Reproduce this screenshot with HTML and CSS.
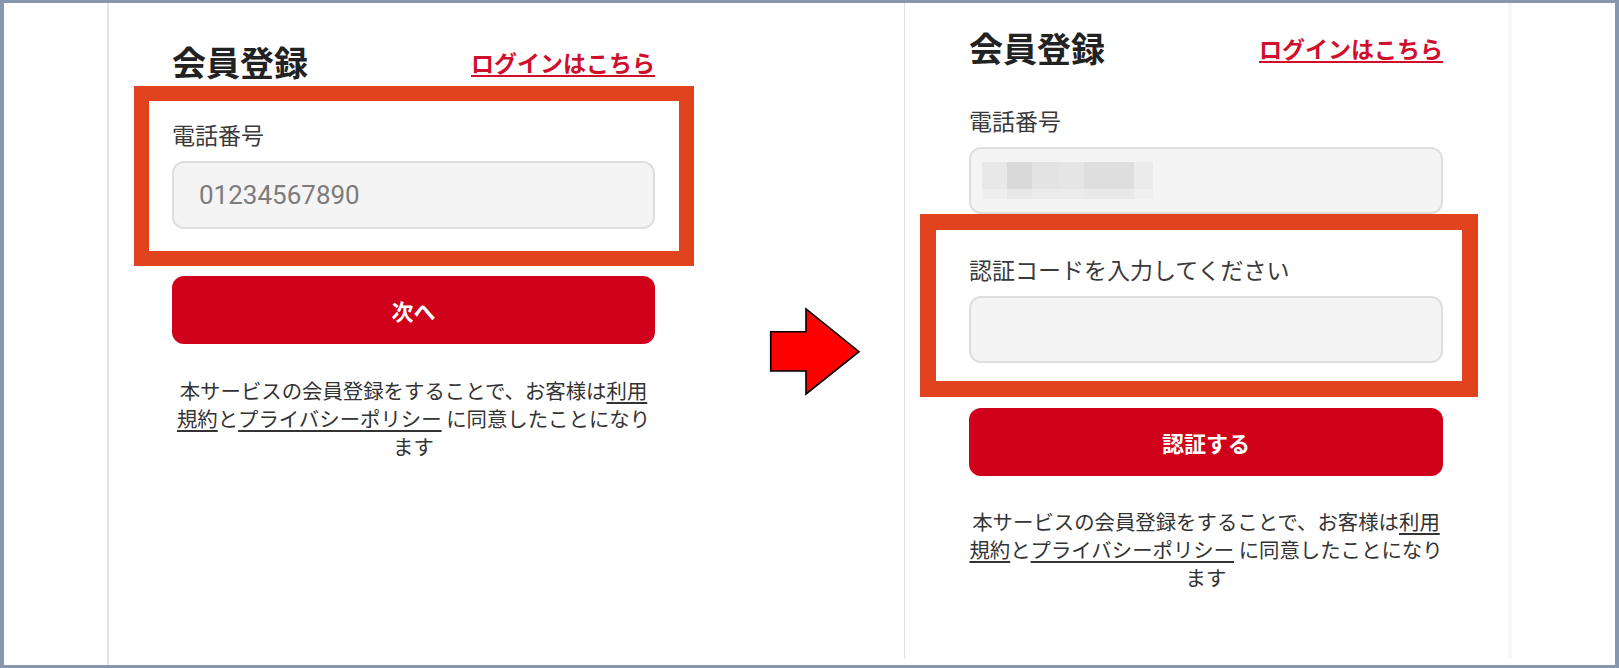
FILE: index.html
```html
<!DOCTYPE html>
<html lang="ja">
<head>
<meta charset="utf-8">
<title>会員登録</title>
<link rel="stylesheet" href="styles.css">
</head>
<body>
<div class="frame">
  <section class="panel panel--first">
    <div class="header">
      <h1 class="title">会員登録</h1>
      <a class="login-link" href="#">ログインはこちら</a>
    </div>
    <div class="field field--marked mark-first">
      <label class="field-label">電話番号</label>
      <input class="input" type="text" placeholder="01234567890">
    </div>
    <button class="btn">次へ</button>
    <p class="terms">本サービスの会員登録をすることで、お客様は<a href="#">利用<br>規約</a>と<a href="#">プライバシーポリシー</a> に同意したことになり<br>ます</p>
  </section>

  <div class="arrow">
    <svg width="92" height="89" viewBox="0 0 92 89">
      <polygon points="1.7,24.7 37,24.7 37,2 90,44.7 37,87 37,64 1.7,64" fill="#ff0000" stroke="#000" stroke-width="1.6" stroke-linejoin="miter"/>
    </svg>
  </div>

  <section class="panel panel--second">
    <div class="header">
      <h1 class="title">会員登録</h1>
      <a class="login-link" href="#">ログインはこちら</a>
    </div>
    <div class="field">
      <label class="field-label">電話番号</label>
      <div class="input input--filled">
        <div class="mosaic">
          <span style="background:#e8e8e8"></span><span style="background:#d9d9d9"></span><span style="background:#e3e3e3"></span><span style="background:#e5e5e5"></span><span style="background:#dedede"></span><span style="background:#dedede"></span><span style="background:#ebebeb"></span>
          <span style="background:#eeeeee"></span><span style="background:#e7e7e7"></span><span style="background:#ebebeb"></span><span style="background:#ececec"></span><span style="background:#e9e9e9"></span><span style="background:#e9e9e9"></span><span style="background:#f0f0f0"></span>
        </div>
      </div>
    </div>
    <div class="field field--marked mark-second">
      <label class="field-label">認証コードを入力してください</label>
      <input class="input" type="text">
    </div>
    <button class="btn">認証する</button>
    <p class="terms">本サービスの会員登録をすることで、お客様は<a href="#">利用<br>規約</a>と<a href="#">プライバシーポリシー</a> に同意したことになり<br>ます</p>
  </section>
</div>
</body>
</html>
```

FILE: styles.css
```css
* { box-sizing: border-box; }

html, body {
  margin: 0;
  padding: 0;
  background: #ffffff;
}

body {
  font-family: "Noto Sans CJK JP", "Noto Sans", sans-serif;
  color: #333333;
}

.frame {
  width: 1619px;
  height: 668px;
  border-style: solid;
  border-color: #8798ae;
  border-width: 3px 4px 3px 4px;
  background: #ffffff;
  display: flex;
  align-items: flex-start;
  overflow: hidden;
}

.panel {
  display: flex;
  flex-direction: column;
}

.panel--first {
  margin-left: 103px;
  width: 613px;
  height: 662px;
  border-left: 2px solid #e1e4ec;
  padding: 42px 65px 0 63px;
  --field-gap: 47px;
  --btn-gap: 47px;
  --terms-gap: 32px;
  --input-h: 68px;
}

.panel--second {
  width: 608px;
  height: 656px;
  border-left: 1px solid #e2e2e4;
  border-right: 4px solid #f6f7fa;
  padding: 28px 65px 0 64px;
  --field-gap: 44px;
  --btn-gap: 45px;
  --terms-gap: 31px;
  --input-h: 67px;
}

.header {
  display: flex;
  justify-content: space-between;
  align-items: center;
  margin-bottom: 44px;
}

.title {
  margin: 0;
  font-size: 34px;
  line-height: 34px;
  font-weight: 700;
  color: #222222;
}

.login-link {
  font-size: 23px;
  line-height: 28px;
  font-weight: 700;
  color: #cf0f2c;
  text-decoration: underline;
  text-underline-offset: 3px;
  text-decoration-thickness: 2px;
}

.field {
  display: flex;
  flex-direction: column;
  gap: 15px;
}

.field + .field {
  margin-top: var(--field-gap);
}

.field-label {
  font-size: 23px;
  line-height: 23px;
  color: #3a3a3a;
}

.input {
  display: block;
  width: 100%;
  height: var(--input-h);
  border: 2px solid #dedede;
  border-radius: 12px;
  background: #f4f4f4;
  padding: 0 25px;
  font-family: Roboto, "Noto Sans", sans-serif;
  font-size: 26px;
  color: #333333;
  outline: none;
}

.input::placeholder {
  color: #7c7c7c;
}

.input--filled {
  display: flex;
  align-items: center;
  padding: 0 0 0 11px;
}

.mosaic {
  display: grid;
  grid-template-columns: 25px 25px 27px 25px 25px 25px 19px;
  grid-template-rows: 27px 10px;
}

.field--marked {
  position: relative;
}

.field--marked::before {
  content: "";
  position: absolute;
  border-style: solid;
  border-color: #e2431f;
  pointer-events: none;
}

.mark-first::before {
  top: -37px;
  left: -38px;
  right: -39px;
  bottom: -37px;
  border-width: 15px;
}

.mark-second::before {
  top: -44px;
  left: -49px;
  right: -35px;
  bottom: -34px;
  border-width: 16px;
}

.btn {
  margin-top: var(--btn-gap);
  width: 100%;
  height: 68px;
  border: none;
  border-radius: 12px;
  background: #d0021b;
  color: #ffffff;
  font-family: "Noto Sans CJK JP", sans-serif;
  font-size: 22px;
  font-weight: 700;
  cursor: pointer;
}

.terms {
  margin: var(--terms-gap) -12px 0;
  font-size: 20.4px;
  line-height: 28px;
  text-align: center;
  white-space: nowrap;
  color: #333333;
}

.terms a {
  color: #333333;
  text-decoration: underline;
  text-underline-offset: 3px;
}

.arrow {
  margin: 304px 43px 0 49px;
  width: 92px;
  height: 89px;
  flex: none;
}

.arrow svg {
  display: block;
}
```
